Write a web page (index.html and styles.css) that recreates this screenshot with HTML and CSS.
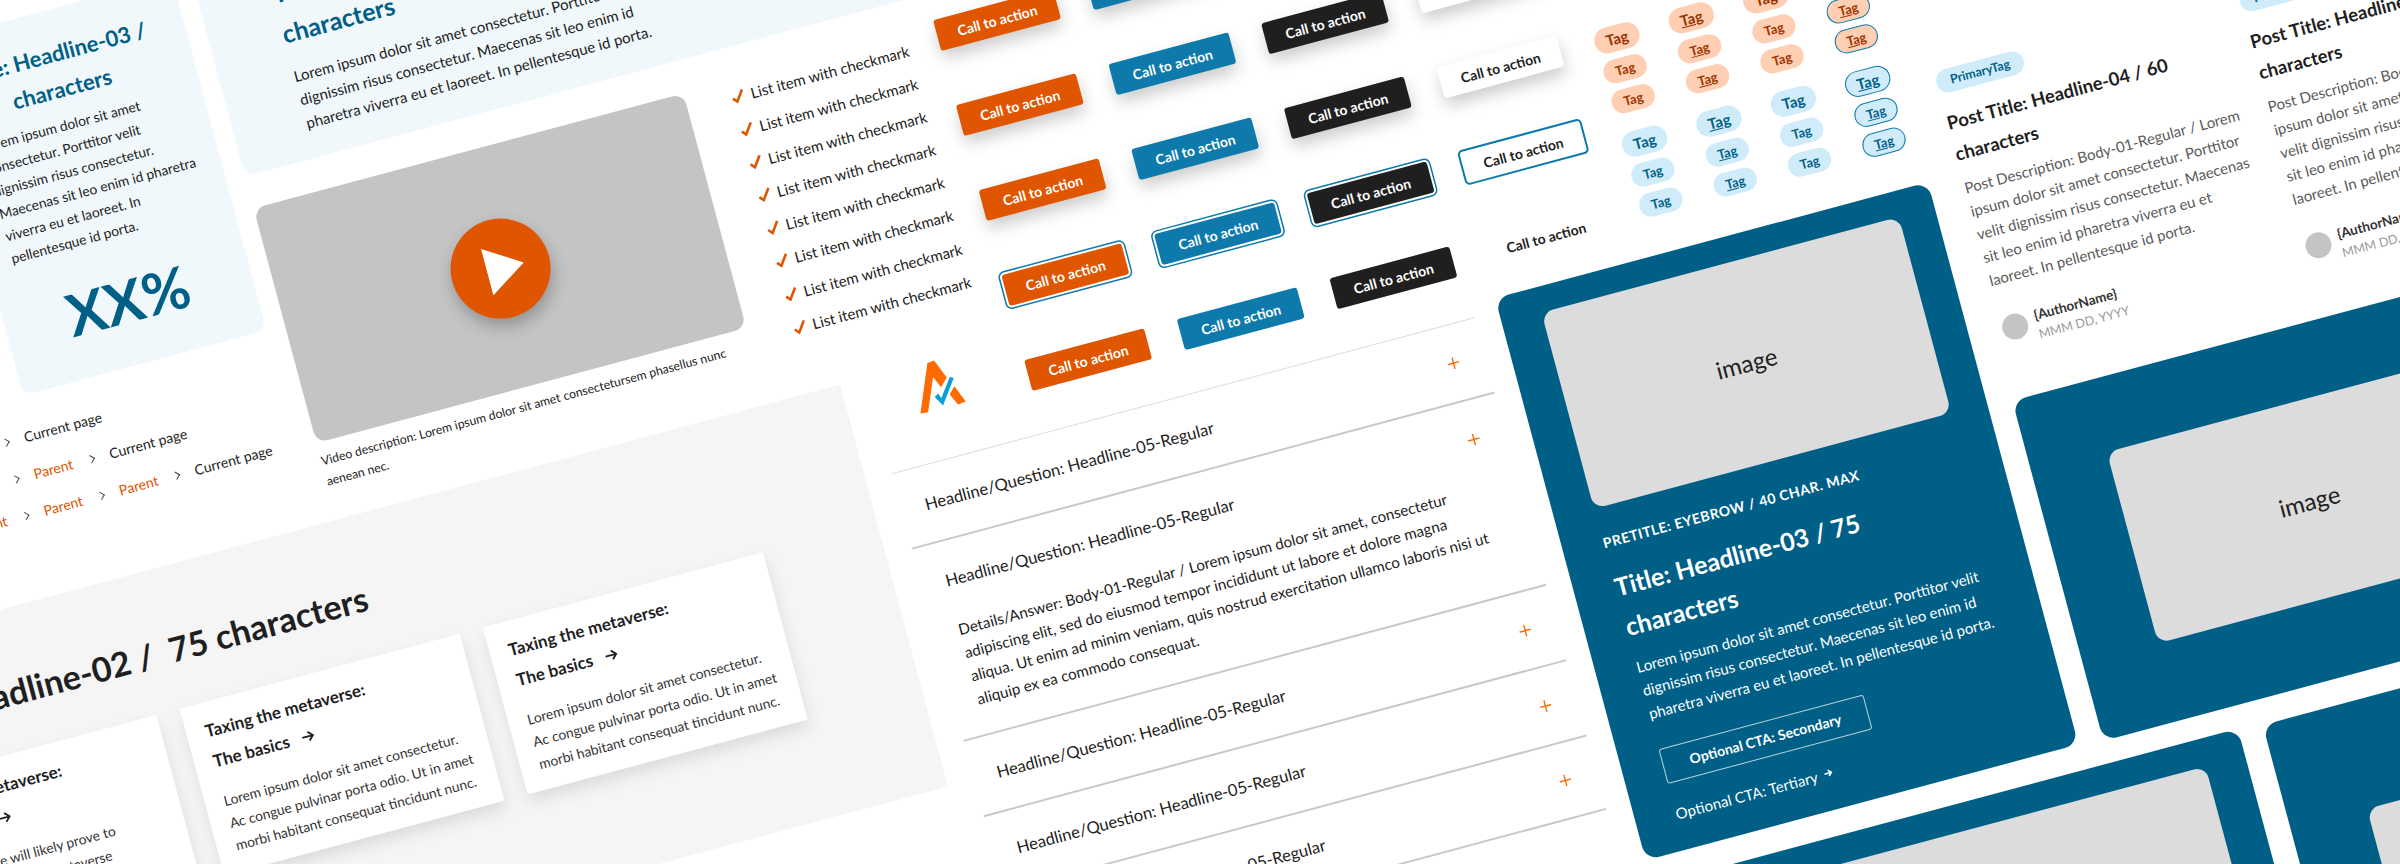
FILE: index.html
```html
<!DOCTYPE html>
<html lang="en">
<head>
    <meta charset="UTF-8">
    <title>Design system components</title>
    <link rel="stylesheet" href="styles.css">
</head>
<body>
<div class="canvas">

    <!-- stat card -->
    <div class="tint-card stat-card">
        <h3 class="stat-title">Title: Headline-03 /<br>characters</h3>
        <p class="body">Lorem ipsum dolor sit amet<br>consectetur. Porttitor velit<br>dignissim risus consectetur.<br>Maecenas sit leo enim id pharetra<br>viverra eu et laoreet. In<br>pellentesque id porta.</p>
        <div class="stat-num">XX%</div>
    </div>

    <!-- wide tint card -->
    <div class="tint-card wide-card">
        <h3 class="wide-title">Title: Headline-03 / 75<br>characters</h3>
        <p class="body">Lorem ipsum dolor sit amet consectetur. Porttitor velit<br>dignissim risus consectetur. Maecenas sit leo enim id<br>pharetra viverra eu et laoreet. In pellentesque id porta.</p>
    </div>

    <!-- video -->
    <div class="video-block">
        <div class="video">
            <div class="play">
                <svg width="38" height="48" viewBox="0 0 38 48"><polygon points="0,0 38,24 0,48" fill="#fff"/></svg>
            </div>
        </div>
        <p class="caption">Video description: Lorem ipsum dolor sit amet consectetursem phasellus nunc<br>aenean nec.</p>
    </div>

    <!-- checklist -->
    <ul class="checklist">
        <li><svg class="check" viewBox="0 0 14 14"><polyline points="1.5,8 5,12 12.5,1.5"/></svg>List item with checkmark</li>
        <li><svg class="check" viewBox="0 0 14 14"><polyline points="1.5,8 5,12 12.5,1.5"/></svg>List item with checkmark</li>
        <li><svg class="check" viewBox="0 0 14 14"><polyline points="1.5,8 5,12 12.5,1.5"/></svg>List item with checkmark</li>
        <li><svg class="check" viewBox="0 0 14 14"><polyline points="1.5,8 5,12 12.5,1.5"/></svg>List item with checkmark</li>
        <li><svg class="check" viewBox="0 0 14 14"><polyline points="1.5,8 5,12 12.5,1.5"/></svg>List item with checkmark</li>
        <li><svg class="check" viewBox="0 0 14 14"><polyline points="1.5,8 5,12 12.5,1.5"/></svg>List item with checkmark</li>
        <li><svg class="check" viewBox="0 0 14 14"><polyline points="1.5,8 5,12 12.5,1.5"/></svg>List item with checkmark</li>
        <li><svg class="check" viewBox="0 0 14 14"><polyline points="1.5,8 5,12 12.5,1.5"/></svg>List item with checkmark</li>
    </ul>

    <!-- buttons -->
    <div class="cta-grid">
        <a class="cta orange raised">Call to action</a>
        <a class="cta blue raised">Call to action</a>
        <a class="cta black raised">Call to action</a>
        <a class="cta white raised">Call to action</a>

        <a class="cta orange raised">Call to action</a>
        <a class="cta blue raised">Call to action</a>
        <a class="cta black raised">Call to action</a>
        <a class="cta white raised">Call to action</a>

        <a class="cta orange raised">Call to action</a>
        <a class="cta blue raised">Call to action</a>
        <a class="cta black raised">Call to action</a>
        <a class="cta white raised">Call to action</a>

        <a class="cta orange focus">Call to action</a>
        <a class="cta blue focus">Call to action</a>
        <a class="cta black focus">Call to action</a>
        <a class="cta white outlined">Call to action</a>

        <a class="cta orange">Call to action</a>
        <a class="cta blue">Call to action</a>
        <a class="cta black">Call to action</a>
        <a class="cta plain">Call to action</a>
    </div>

    <!-- logo -->
    <svg class="logo" width="90" height="90" viewBox="0 0 270 270">
        <polygon fill="#ff6a00" points="62,222 83,70 103,63 141,114 124,143 100,112 85,218"/>
        <polygon fill="#ff6a00" points="164,140 198,186 175,195 150,165"/>
        <polygon fill="#0b9ed9" points="105,172 115,162 125,175 150,112 162,115 130,198"/>
    </svg>

    <!-- tags -->
    <div class="tag-grid">
        <div class="tag-col">
            <div class="tag-group peach">
                <span class="tag big">Tag</span><span class="tag">Tag</span><span class="tag">Tag</span>
            </div>
            <div class="tag-group sky">
                <span class="tag big">Tag</span><span class="tag">Tag</span><span class="tag">Tag</span>
            </div>
        </div>
        <div class="tag-col linked">
            <div class="tag-group peach">
                <span class="tag big">Tag</span><span class="tag">Tag</span><span class="tag">Tag</span>
            </div>
            <div class="tag-group sky">
                <span class="tag big">Tag</span><span class="tag">Tag</span><span class="tag">Tag</span>
            </div>
        </div>
        <div class="tag-col">
            <div class="tag-group peach">
                <span class="tag big">Tag</span><span class="tag">Tag</span><span class="tag">Tag</span>
            </div>
            <div class="tag-group sky">
                <span class="tag big">Tag</span><span class="tag">Tag</span><span class="tag">Tag</span>
            </div>
        </div>
        <div class="tag-col linked ringed">
            <div class="tag-group peach">
                <span class="tag big">Tag</span><span class="tag">Tag</span><span class="tag">Tag</span>
            </div>
            <div class="tag-group sky">
                <span class="tag big">Tag</span><span class="tag">Tag</span><span class="tag">Tag</span>
            </div>
        </div>
    </div>

    <!-- post previews -->
    <div class="post post-a">
        <span class="primary-tag">PrimaryTag</span>
        <h4 class="post-title">Post Title: Headline-04 / 60<br>characters</h4>
        <p class="post-text">Post Description: Body-01-Regular / Lorem<br>ipsum dolor sit amet consectetur. Porttitor<br>velit dignissim risus consectetur. Maecenas<br>sit leo enim id pharetra viverra eu et<br>laoreet. In pellentesque id porta.</p>
        <div class="author">
            <span class="avatar"></span>
            <div>
                <div class="author-name">{AuthorName}</div>
                <div class="author-date">MMM DD, YYYY</div>
            </div>
        </div>
    </div>
    <div class="post post-b">
        <span class="primary-tag">PrimaryTag</span>
        <h4 class="post-title">Post Title: Headline-04 / 60<br>characters</h4>
        <p class="post-text">Post Description: Body-01-Regular / Lorem<br>ipsum dolor sit amet consectetur. Porttitor<br>velit dignissim risus consectetur. Maecenas<br>sit leo enim id pharetra viverra eu et<br>laoreet. In pellentesque id porta.</p>
        <div class="author">
            <span class="avatar"></span>
            <div>
                <div class="author-name">{AuthorName}</div>
                <div class="author-date">MMM DD, YYYY</div>
            </div>
        </div>
    </div>

    <!-- teal cards -->
    <div class="teal-card teal-main">
        <div class="image image-main">image</div>
        <div class="pretitle">PRETITLE: EYEBROW / 40 CHAR. MAX</div>
        <h3 class="teal-title">Title: Headline-03 / 75<br>characters</h3>
        <p class="body">Lorem ipsum dolor sit amet consectetur. Porttitor velit<br>dignissim risus consectetur. Maecenas sit leo enim id<br>pharetra viverra eu et laoreet. In pellentesque id porta.</p>
        <a class="cta-secondary">Optional CTA: Secondary</a>
        <a class="cta-tertiary">Optional CTA: Tertiary
            <svg width="10" height="10" viewBox="0 0 10 10"><path d="M1 5h7M5 2l3 3-3 3" fill="none" stroke="#fff" stroke-width="1.6"/></svg>
        </a>
    </div>
    <div class="teal-card teal-side">
        <div class="image image-side">image</div>
    </div>
    <div class="teal-card teal-low">
        <div class="image image-low">image</div>
    </div>
    <div class="teal-card teal-corner">
        <div class="image image-corner">image</div>
    </div>

    <!-- breadcrumbs -->
    <div class="crumbs">
        <div class="crumb-row"><a>Parent</a><i></i><span>Current page</span></div>
        <div class="crumb-row"><a>Parent</a><i></i><a>Parent</a><i></i><span>Current page</span></div>
        <div class="crumb-row"><a>Parent</a><i></i><a>Parent</a><i></i><a>Parent</a><i></i><span>Current page</span></div>
    </div>

    <!-- grey section -->
    <section class="grey-section">
        <h2 class="grey-title">Title: Headline-02 /&nbsp; 75 characters</h2>
        <div class="tile-row">
            <div class="tile">
                <h5 class="tile-title">Taxing the metaverse:<br>The basics
                    <svg class="arrow" width="14" height="14" viewBox="0 0 14 14"><path d="M1 7h11M7.5 2.5L12 7l-4.5 4.5" fill="none" stroke="#1f1f1f" stroke-width="1.8"/></svg>
                </h5>
                <p class="tile-text">The metaverse will likely prove to<br>be a challenge as the metaverse<br>grows in scale and in scope.</p>
            </div>
            <div class="tile">
                <h5 class="tile-title">Taxing the metaverse:<br>The basics
                    <svg class="arrow" width="14" height="14" viewBox="0 0 14 14"><path d="M1 7h11M7.5 2.5L12 7l-4.5 4.5" fill="none" stroke="#1f1f1f" stroke-width="1.8"/></svg>
                </h5>
                <p class="tile-text">Lorem ipsum dolor sit amet consectetur.<br>Ac congue pulvinar porta odio. Ut in amet<br>morbi habitant consequat tincidunt nunc.</p>
            </div>
            <div class="tile">
                <h5 class="tile-title">Taxing the metaverse:<br>The basics
                    <svg class="arrow" width="14" height="14" viewBox="0 0 14 14"><path d="M1 7h11M7.5 2.5L12 7l-4.5 4.5" fill="none" stroke="#1f1f1f" stroke-width="1.8"/></svg>
                </h5>
                <p class="tile-text">Lorem ipsum dolor sit amet consectetur.<br>Ac congue pulvinar porta odio. Ut in amet<br>morbi habitant consequat tincidunt nunc.</p>
            </div>
        </div>
    </section>

    <!-- accordion -->
    <div class="accordion">
        <div class="acc-row first"><span>Headline/Question: Headline-05-Regular</span><svg class="plus" viewBox="0 0 12 12"><path d="M6 0v12M0 6h12"/></svg></div>
        <div class="acc-row open">
            <div class="acc-head"><span>Headline/Question: Headline-05-Regular</span><svg class="plus" viewBox="0 0 12 12"><path d="M6 0v12M0 6h12"/></svg></div>
            <p class="acc-text">Details/Answer: Body-01-Regular / Lorem ipsum dolor sit amet, consectetur<br>adipiscing elit, sed do eiusmod tempor incididunt ut labore et dolore magna<br>aliqua. Ut enim ad minim veniam, quis nostrud exercitation ullamco laboris nisi ut<br>aliquip ex ea commodo consequat.</p>
        </div>
        <div class="acc-row"><span>Headline/Question: Headline-05-Regular</span><svg class="plus" viewBox="0 0 12 12"><path d="M6 0v12M0 6h12"/></svg></div>
        <div class="acc-row"><span>Headline/Question: Headline-05-Regular</span><svg class="plus" viewBox="0 0 12 12"><path d="M6 0v12M0 6h12"/></svg></div>
        <div class="acc-row last"><span>Headline/Question: Headline-05-Regular</span><svg class="plus" viewBox="0 0 12 12"><path d="M6 0v12M0 6h12"/></svg></div>
    </div>

</div>
</body>
</html>
```

FILE: styles.css
```css
html, body {
    margin: 0;
    height: 100%;
    overflow: hidden;
    background-color: #fff;
}

body {
    font-family: "Lato", "Open Sans", sans-serif;
    color: #222;
}

/* the whole sheet is a free canvas tilted by 15 degrees */
.canvas {
    position: absolute;
    left: 0;
    top: 0;
    width: 0;
    height: 0;
    transform: rotate(-15deg);
    transform-origin: 0 0;
}

.canvas > * {
    position: absolute;
}

h2, h3, h4, h5, p, ul {
    margin: 0;
    padding: 0;
}

.body {
    font-size: 15px;
    line-height: 24px;
    white-space: nowrap;
}

.tint-card {
    background-color: #f1f8fc;
    border-radius: 12px;
    box-sizing: border-box;
    color: #222;
}

.stat-card {
    left: -80px;
    top: 22px;
    width: 252px;
    height: 366px;
    padding: 26px 24px 0;
}

.stat-title {
    font-size: 22px;
    line-height: 36px;
    font-weight: 700;
    color: #005f87;
    text-align: center;
    white-space: nowrap;
    margin-left: -14px;
    width: 214px;
}

.stat-card .body {
    margin-top: 6px;
    font-size: 13.8px;
    line-height: 23px;
}

.stat-num {
    margin-top: 24px;
    font-size: 58px;
    line-height: 70px;
    font-weight: 700;
    color: #005f87;
    text-align: center;
}

.wide-card {
    left: 191px;
    top: -100px;
    width: 900px;
    height: 334px;
    padding: 145px 0 0 73px;
}

.wide-title {
    font-size: 25px;
    line-height: 41px;
    font-weight: 700;
    color: #005f87;
}

.wide-card .body {
    margin-top: 11px;
}

.video-block {
    left: 191px;
    top: 267px;
    width: 445px;
}

.video {
    height: 243px;
    background-color: #c4c4c4;
    border-radius: 12px;
    display: flex;
    align-items: center;
    justify-content: center;
}

.play {
    width: 100px;
    height: 100px;
    border-radius: 50%;
    background-color: #e05500;
    box-shadow: 0 8px 16px rgba(0,0,0,0.25);
    display: flex;
    align-items: center;
    justify-content: center;
}

.play svg {
    margin-left: 10px;
}

.caption {
    margin-top: 8px;
    font-size: 12.3px;
    line-height: 21px;
    white-space: nowrap;
}

.checklist {
    left: 681px;
    top: 272px;
    list-style: none;
    display: flex;
    flex-direction: column;
    gap: 10.1px;
}

.checklist li {
    display: flex;
    align-items: center;
    gap: 6px;
    font-size: 15px;
    line-height: 24px;
    white-space: nowrap;
}

.check {
    width: 14px;
    height: 14px;
    fill: none;
    stroke: #e05500;
    stroke-width: 2.6;
}

.cta-grid {
    left: 896px;
    top: 261px;
    display: grid;
    grid-template-columns: repeat(4, 124px);
    grid-auto-rows: 32px;
    column-gap: 34px;
    row-gap: 56px;
}

.cta {
    display: flex;
    align-items: center;
    justify-content: center;
    border-radius: 3px;
    font-size: 14px;
    font-weight: 700;
    color: #fff;
    white-space: nowrap;
}

.orange { background-color: #e05500; }
.blue { background-color: #0d7aab; }
.black { background-color: #1f1f1f; }
.white { background-color: #fff; color: #1f1f1f; }
.plain { color: #1f1f1f; }

.raised {
    box-shadow: 0 8px 16px rgba(0,0,0,0.2);
}

.focus {
    box-shadow: 0 0 0 2px #fff, 0 0 0 3.5px #0d7aab;
}

.outlined {
    box-shadow: 0 0 0 2px #0d7aab;
}

.logo {
    left: 768px;
    top: 571px;
    transform: rotate(15deg);
}

.tag-grid {
    left: 1529px;
    top: 442px;
    display: flex;
    gap: 31px;
}

.tag-col {
    display: flex;
    flex-direction: column;
    gap: 19px;
}

.tag-group {
    display: flex;
    flex-direction: column;
    align-items: center;
    gap: 7px;
}

.tag {
    width: 44px;
    height: 24px;
    border-radius: 12px;
    display: flex;
    align-items: center;
    justify-content: center;
    font-size: 13px;
    font-weight: 700;
    box-sizing: border-box;
}

.tag.big {
    width: 46px;
    height: 26px;
    border-radius: 13px;
    font-size: 15px;
}

.peach .tag {
    background-color: #ffcfb3;
    color: #9c3300;
}

.sky .tag {
    background-color: #d0ecfa;
    color: #005f87;
}

.linked .tag {
    text-decoration: underline;
}

.ringed .tag {
    border: 1.5px solid #0d7aab;
}

.post {
    width: 300px;
    top: 570px;
}

.post-a { left: 1849px; }
.post-b { left: 2163px; }

.primary-tag {
    display: block;
    width: 90px;
    height: 24px;
    line-height: 24px;
    border-radius: 12px;
    background-color: #d0ecfa;
    color: #005f87;
    font-size: 12.5px;
    font-weight: 700;
    text-align: center;
}

.post-title {
    margin-top: 13px;
    font-size: 18.5px;
    line-height: 32px;
    font-weight: 700;
    color: #1f1f1f;
    white-space: nowrap;
}

.post-text {
    margin-top: 7px;
    font-size: 15px;
    line-height: 24px;
    color: #5a5a5a;
    white-space: nowrap;
}

.author {
    margin-top: 23px;
    display: flex;
    gap: 8px;
}

.avatar {
    width: 26px;
    height: 26px;
    margin-top: 3px;
    border-radius: 50%;
    background-color: #c4c4c4;
}

.author-name {
    font-size: 13.5px;
    line-height: 20px;
    font-weight: 700;
    color: #333;
}

.author-date {
    font-size: 12.5px;
    line-height: 20px;
    color: #999;
}

.teal-card {
    background-color: #005f87;
    border-radius: 14px;
    box-sizing: border-box;
    color: #fff;
}

.teal-main {
    left: 1367px;
    top: 675px;
    width: 448px;
    height: 582px;
    padding: 26px 37px 0 41px;
}

.teal-side {
    left: 1840px;
    top: 908px;
    width: 517px;
    height: 352px;
    padding: 74px 73px 0 78px;
}

.teal-low {
    left: 1383px;
    top: 1283px;
    width: 590px;
    height: 400px;
    padding: 28px 41px 0 40px;
}

.teal-corner {
    left: 1998px;
    top: 1286px;
    width: 600px;
    height: 400px;
    padding: 108px 79px 0;
}

.image {
    display: flex;
    align-items: center;
    justify-content: center;
    background-color: #dcdcdc;
    border-radius: 12px;
    color: #222;
    font-size: 24px;
}

.image-main { height: 203px; }
.image-side { height: 198px; }
.image-low { height: 300px; }
.image-corner { height: 300px; }

.pretitle {
    margin-top: 25px;
    font-size: 14px;
    line-height: 22px;
    font-weight: 700;
    letter-spacing: 0.5px;
    white-space: nowrap;
}

.teal-title {
    margin-top: 14px;
    font-size: 25px;
    line-height: 41px;
    font-weight: 700;
    white-space: nowrap;
}

.teal-main .body {
    margin-top: 9px;
}

.cta-secondary {
    display: block;
    box-sizing: border-box;
    width: 212px;
    height: 36px;
    margin-top: 25px;
    line-height: 34px;
    border: 1px solid #b9d3df;
    border-radius: 3px;
    text-align: center;
    font-size: 14px;
    font-weight: 700;
}

.cta-tertiary {
    display: flex;
    align-items: center;
    gap: 6px;
    margin-top: 19px;
    font-size: 15px;
    line-height: 24px;
}

.crumbs {
    left: -168px;
    top: 417px;
    display: flex;
    flex-direction: column;
    gap: 14px;
}

.crumb-row {
    display: flex;
    align-items: center;
    gap: 16px;
    font-size: 14px;
    line-height: 24px;
    white-space: nowrap;
}

.crumb-row a {
    color: #e05500;
}

/* chevron between crumbs */
.crumb-row i {
    width: 5px;
    height: 5px;
    border-top: 1px solid #444;
    border-right: 1px solid #444;
    transform: rotate(45deg);
}

.grey-section {
    left: -500px;
    top: 589px;
    width: 1212px;
    height: 416px;
    box-sizing: border-box;
    padding: 61px 118px 0 0;
    background-color: #f5f5f5;
}

.grey-title {
    font-size: 34px;
    line-height: 44px;
    font-weight: 700;
    color: #1f1f1f;
    text-align: right;
    white-space: nowrap;
    padding-right: 394px;
}

.tile-row {
    margin-top: 37px;
    display: flex;
    justify-content: flex-end;
    align-items: flex-start;
    gap: 24px;
}

.tile {
    width: 290px;
    box-sizing: border-box;
    padding: 13px 19px 15px;
    background-color: #fff;
    box-shadow: 0 8px 16px rgba(0,0,0,0.1);
    border-radius: 2px;
}

.tile-title {
    font-size: 17px;
    line-height: 31px;
    font-weight: 700;
    color: #1f1f1f;
}

.arrow {
    margin-left: 8px;
    vertical-align: -1px;
}

.tile-text {
    margin-top: 14px;
    font-size: 13.8px;
    line-height: 23px;
    color: #333;
    white-space: nowrap;
}

.accordion {
    left: 739px;
    top: 688px;
    width: 603px;
}

.acc-row {
    border-top: 2px solid #c8c8c8;
    box-sizing: border-box;
    font-size: 16.6px;
}

.acc-row.first {
    border-top: 1px solid #ddd;
}

.acc-row.last {
    border-bottom: 2px solid #c8c8c8;
}

.acc-row:not(.open), .acc-head {
    height: 77px;
    display: flex;
    align-items: center;
    justify-content: space-between;
    padding: 0 26px 0 24px;
}

.acc-row:not(.open) {
    height: 78px;
}

.acc-row.first {
    height: 77px;
}

.acc-row.open {
    height: 199px;
}

.acc-text {
    padding-left: 24px;
    font-size: 15.2px;
    line-height: 24px;
    white-space: nowrap;
}

.plus {
    width: 12px;
    height: 12px;
    fill: none;
    stroke: #ff6a00;
    stroke-width: 1.4;
}
```
